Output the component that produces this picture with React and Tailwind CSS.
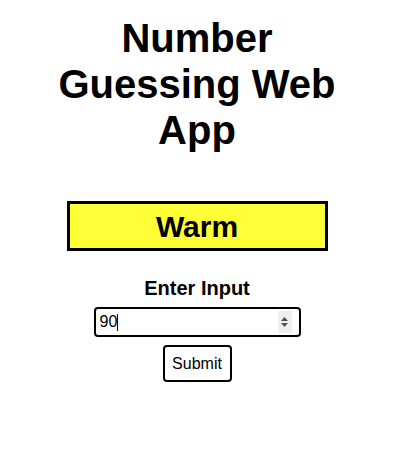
import React from 'react';

const App = () => {
  return (
    <div className="w-[394px] flex flex-col items-center pt-[15px] text-black font-['Liberation_Sans',Arial,sans-serif]">
      <h1 className="w-[300px] text-center text-[40px] font-bold leading-[46px]">
        Number Guessing Web App
      </h1>

      <div className="mt-[48px] w-[261px] h-[50px] border-[3px] border-black bg-[#ffff38] flex items-center justify-center">
        <span className="text-[30px] font-bold">Warm</span>
      </div>

      <label className="mt-[26px] text-[20px] font-bold leading-[23px]">Enter Input</label>

      <div className="mt-[7px] w-[207px] h-[30px] border-2 border-black rounded-[4px] flex items-center pl-[4px] pr-[7px]">
        <span className="text-[16px] leading-[18px]">90</span>
        <span className="w-px h-[17px] bg-black"></span>
        <div className="ml-auto w-[14px] h-[22px] bg-[#efefef] flex flex-col items-center justify-center gap-[2px]">
          <svg width="7" height="4" viewBox="0 0 7 4">
            <path d="M0 4 L3.5 0 L7 4 Z" fill="#505050" />
          </svg>
          <svg width="7" height="4" viewBox="0 0 7 4">
            <path d="M0 0 L3.5 4 L7 0 Z" fill="#505050" />
          </svg>
        </div>
      </div>

      <button className="mt-[8px] w-[69px] h-[37px] border-2 border-black rounded-[4px] bg-white text-[16px] flex items-center justify-center">
        Submit
      </button>
    </div>
  );
};

export default App;
